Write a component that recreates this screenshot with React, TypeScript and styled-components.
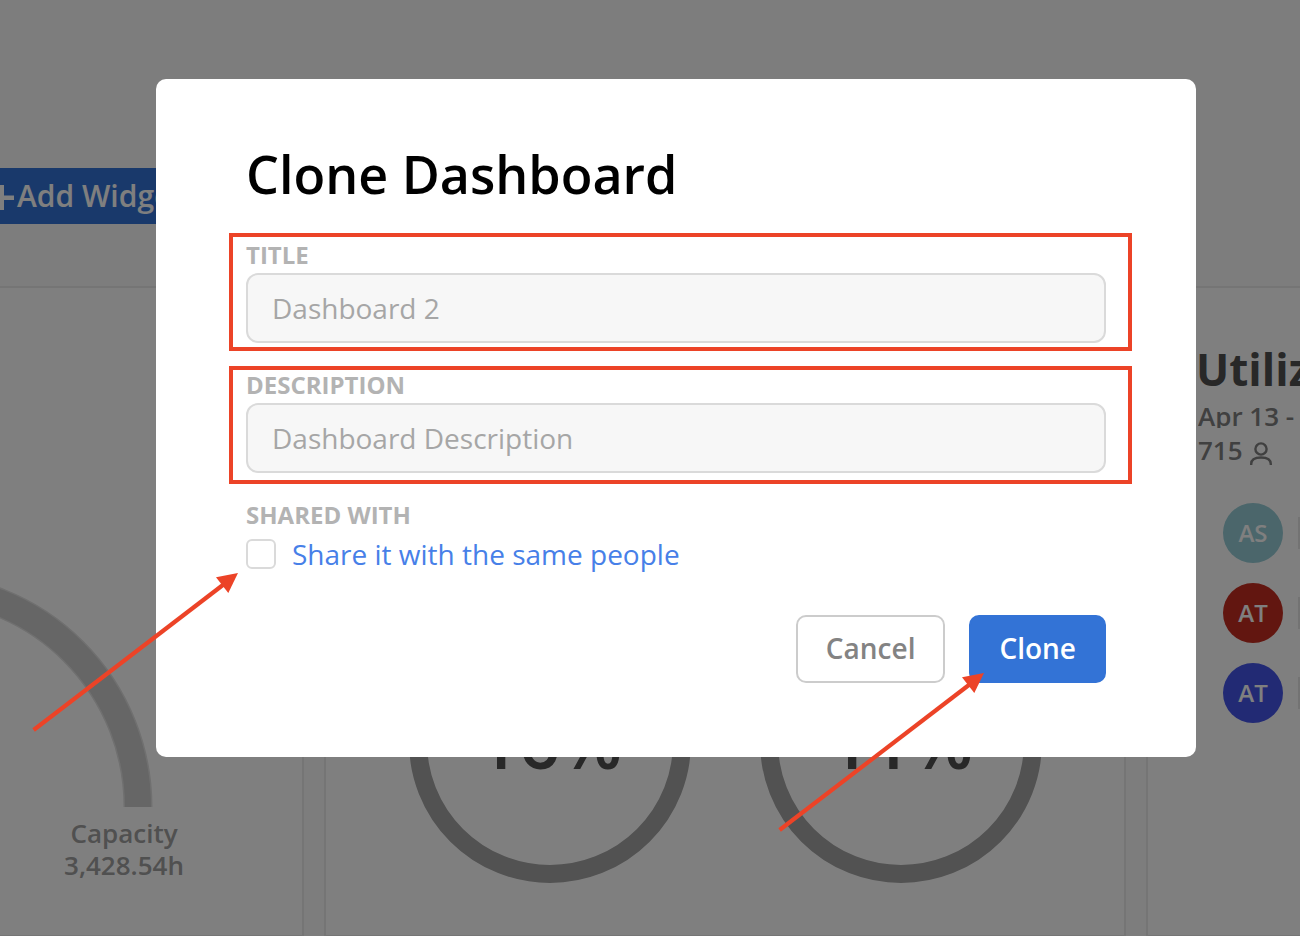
import React from "react";
import styled, { createGlobalStyle } from "styled-components";

const GlobalStyle = createGlobalStyle`
  *, *::before, *::after { box-sizing: border-box; }
  body {
    margin: 0;
    background: #fafafa;
    font-family: "Open Sans", sans-serif;
    overflow: hidden;
  }
  h1, h2, p, ul { margin: 0; padding: 0; }
  ul { list-style: none; }
`;

const Page = styled.main`
  display: flex;
  flex-direction: column;
  height: 100vh;
  overflow: hidden;
`;

const Toolbar = styled.header`
  display: flex;
  padding: 168px 0 62px;
`;

const AddButton = styled.button`
  display: flex;
  align-items: center;
  gap: 3px;
  height: 56px;
  padding: 0 24px 0 0;
  border: 0;
  background: #3373d6;
  color: #fff;
  font: 600 30px/40px "Open Sans", sans-serif;
  white-space: nowrap;
`;

const Board = styled.section`
  flex: 1;
  display: grid;
  grid-template-columns: 304px 1fr 154px;
  gap: 20px;
  margin-bottom: -1px;
`;

const Card = styled.article`
  min-width: 0;
  overflow: hidden;
  background: #fff;
  border: 2px solid #ebebeb;
`;

const GaugeCard = styled(Card)`
  padding-top: 285px;
  border-left: 0;
`;

const GaugeArc = styled.svg`
  display: block;
`;

const GaugeLabel = styled.p`
  width: 248px;
  padding-top: 10px;
  color: #a0a0a0;
  font-size: 26px;
  font-weight: 600;
  line-height: 32px;
  text-align: center;
`;

const RingCard = styled(Card)`
  display: flex;
  justify-content: center;
  gap: 69px;
  padding: 313px 0 0 1px;
`;

const Ring = styled.div`
  display: flex;
  flex: none;
  align-items: center;
  justify-content: center;
  width: 282px;
  height: 282px;
  padding-bottom: 2px;
  border: 18px solid #a4a4a4;
  border-radius: 50%;
  color: #505050;
  font-size: 72px;
  font-weight: 600;
  line-height: 84px;
`;

const PeopleCard = styled(Card)`
  padding: 50px 0 0 50px;
  border-right: 0;
  white-space: nowrap;
`;

const PeopleTitle = styled.h2`
  margin-left: -2px;
  color: #505050;
  font-size: 44px;
  font-weight: 700;
  line-height: 62px;
`;

const DateRange = styled.p`
  height: 28px;
  margin-bottom: 6px;
  overflow: hidden;
  color: #808080;
  font-size: 26px;
  font-weight: 600;
  line-height: 32px;
`;

const PeopleCount = styled.p`
  display: flex;
  gap: 7px;
  margin-bottom: 37px;
  color: #808080;
  font-size: 26px;
  font-weight: 600;
  line-height: 32px;
`;

const PeopleList = styled.ul`
  display: flex;
  flex-direction: column;
  gap: 20px;
  padding-left: 25px;
`;

const Person = styled.li`
  display: flex;
  align-items: center;
  gap: 15px;
`;

const Avatar = styled.span<{ $color: string }>`
  display: flex;
  flex: none;
  align-items: center;
  justify-content: center;
  width: 60px;
  height: 60px;
  padding-bottom: 2px;
  border-radius: 50%;
  background: ${(p) => p.$color};
  color: #fff;
  font-size: 24px;
  font-weight: 600;
`;

const Bar = styled.span`
  flex: none;
  width: 120px;
  height: 32px;
  background: #e6e6e6;
`;

const Backdrop = styled.div`
  position: fixed;
  inset: 0;
  padding: 79px 104px 0 156px;
  background: rgba(0, 0, 0, 0.5);
`;

const Dialog = styled.form`
  display: flex;
  flex-direction: column;
  gap: 26px;
  padding: 59px 90px 74px;
  border-radius: 10px;
  background: #fff;
`;

const DialogTitle = styled.h1`
  margin-bottom: 3px;
  color: #000;
  font-size: 52px;
  font-weight: 600;
  line-height: 72px;
`;

const Field = styled.div`
  position: relative;
  display: flex;
  flex-direction: column;
  gap: 2px;
`;

const ShareGroup = styled.fieldset`
  display: flex;
  flex-direction: column;
  min-width: 0;
  margin: 0;
  padding: 0;
  border: 0;
`;

const labelText = `
  color: #b3b3b3;
  font-size: 24px;
  font-weight: 700;
  line-height: 32px;
  text-transform: uppercase;
`;

const FieldLabel = styled.label`
  ${labelText}
`;

const GroupLabel = styled.legend`
  ${labelText}
  padding: 0 0 8px;
`;

const TextInput = styled.input`
  width: 100%;
  height: 70px;
  padding: 0 24px;
  border: 2px solid #dadada;
  border-radius: 12px;
  background: #f7f7f7;
  font: 400 28px/40px "Open Sans", sans-serif;
  &::placeholder { color: #a6a6a6; opacity: 1; }
`;

const Highlight = styled.span<{ $top: number }>`
  position: absolute;
  top: ${(p) => p.$top}px;
  right: -26px;
  left: -17px;
  height: 118px;
  border: 4px solid #ec4327;
  pointer-events: none;
`;

const ShareRow = styled.div`
  position: relative;
  display: flex;
  align-items: center;
  gap: 16px;
  height: 30px;
`;

const Checkbox = styled.input`
  appearance: none;
  width: 30px;
  height: 30px;
  margin: 0;
  border: 2px solid #dadada;
  border-radius: 6px;
  background: #fff;
`;

const ShareLabel = styled.label`
  color: #4780e8;
  font-size: 28px;
  line-height: 30px;
`;

const Actions = styled.div`
  display: flex;
  justify-content: flex-end;
  gap: 24px;
  padding-top: 20px;
`;

const ActionSlot = styled.div`
  position: relative;
`;

const DialogButton = styled.button<{ $primary?: boolean }>`
  height: 68px;
  padding: 0 28px 2px;
  border: 2px solid ${(p) => (p.$primary ? "#3373d6" : "#cccccc")};
  border-radius: 10px;
  background: ${(p) => (p.$primary ? "#3373d6" : "#fff")};
  color: ${(p) => (p.$primary ? "#fff" : "#838383")};
  font: 600 28px/40px "Open Sans", sans-serif;
`;

const ArrowSvg = styled.svg<{ $left: number; $top: number }>`
  position: absolute;
  top: ${(p) => p.$top}px;
  left: ${(p) => p.$left}px;
  pointer-events: none;
`;

function Arrow({ left, top }: { left: number; top: number }) {
  return (
    <ArrowSvg $left={left} $top={top} width="208" height="162" viewBox="0 0 208 162" aria-hidden="true">
      <path d="M1.600 158 193.500 11" stroke="#ec4327" strokeWidth="4.2" />
      <path d="M206 1 184 5.3 196.3 21Z" fill="#ec4327" />
    </ArrowSvg>
  );
}

const people = [
  { initials: "AS", color: "#96ccd6" },
  { initials: "AT", color: "#c42d20" },
  { initials: "AT", color: "#4455e8" },
];

export default function App() {
  return (
    <>
      <GlobalStyle />
      <Page>
        <Toolbar>
          <AddButton type="button">
            <svg width="14" height="28" viewBox="0 0 14 28" aria-hidden="true">
              <path d="M0 3h4v10.500h10v4.500h-10v10h-4z" fill="#fff" />
            </svg>
            Add Widget
          </AddButton>
        </Toolbar>
        <Board>
          <GaugeCard>
            <GaugeArc width="154" height="234" viewBox="0 0 154 234" aria-hidden="true">
              <circle cx="-82" cy="234" r="220" fill="none" stroke="#e0e0e0" strokeWidth="29" />
              <circle cx="-82" cy="234" r="220" fill="none" stroke="#cccccc" strokeWidth="26" />
            </GaugeArc>
            <GaugeLabel>
              Capacity
              <br />
              3,428.54h
            </GaugeLabel>
          </GaugeCard>
          <RingCard>
            <Ring>16%</Ring>
            <Ring>11%</Ring>
          </RingCard>
          <PeopleCard>
            <PeopleTitle>Utilization</PeopleTitle>
            <DateRange>Apr 13 - May 13</DateRange>
            <PeopleCount>
              715
              <svg width="22" height="32" viewBox="0 0 22 32" fill="none" stroke="#808080" strokeWidth="2.4" aria-hidden="true">
                <circle cx="11" cy="15" r="5.600" />
                <path d="M1.200 31v-1c0-4.500 4-6.500 9.800-6.500s9.800 2 9.800 6.500v1" />
              </svg>
            </PeopleCount>
            <PeopleList>
              {people.map((person, i) => (
                <Person key={i}>
                  <Avatar $color={person.color}>{person.initials}</Avatar>
                  <Bar />
                </Person>
              ))}
            </PeopleList>
          </PeopleCard>
        </Board>
      </Page>
      <Backdrop>
        <Dialog role="dialog" aria-labelledby="dialog-title">
          <DialogTitle id="dialog-title">Clone Dashboard</DialogTitle>
          <Field>
            <FieldLabel htmlFor="title">Title</FieldLabel>
            <TextInput id="title" placeholder="Dashboard 2" />
            <Highlight $top={-6} />
          </Field>
          <Field>
            <FieldLabel htmlFor="description">Description</FieldLabel>
            <TextInput id="description" placeholder="Dashboard Description" />
            <Highlight $top={-3} />
          </Field>
          <ShareGroup>
            <GroupLabel>Shared with</GroupLabel>
            <ShareRow>
              <Checkbox id="share" type="checkbox" />
              <ShareLabel htmlFor="share">Share it with the same people</ShareLabel>
              <Arrow left={-214} top={33} />
            </ShareRow>
          </ShareGroup>
          <Actions>
            <DialogButton type="button">Cancel</DialogButton>
            <ActionSlot>
              <DialogButton type="button" $primary>Clone</DialogButton>
              <Arrow left={-191} top={57} />
            </ActionSlot>
          </Actions>
        </Dialog>
      </Backdrop>
    </>
  );
}
